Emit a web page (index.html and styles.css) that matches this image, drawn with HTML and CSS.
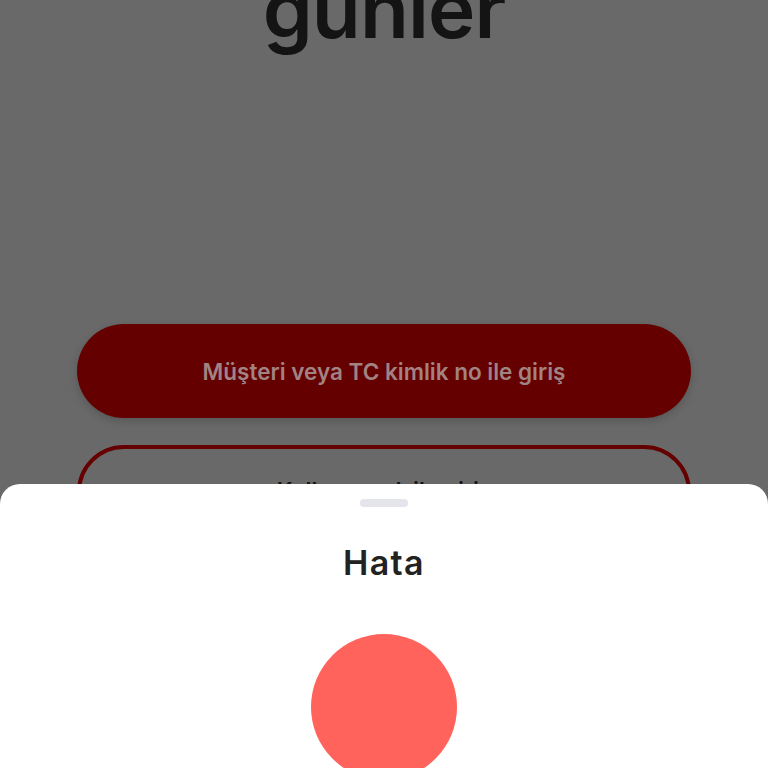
FILE: index.html
```html
<!DOCTYPE html>
<html lang="tr">
<head>
<meta charset="utf-8">
<title>Hata</title>
<link rel="stylesheet" href="styles.css">
</head>
<body>
<div class="screen">
  <main class="page">
    <div class="logo">gunler</div>
    <div class="actions">
      <button class="btn btn-primary">Müşteri veya TC kimlik no ile giriş</button>
      <button class="btn btn-outline">Kullanıcı adı ile giriş</button>
    </div>
  </main>
  <section class="sheet">
    <div class="handle"></div>
    <h2 class="title">Hata</h2>
    <div class="circle"></div>
  </section>
</div>
</body>
</html>
```
FILE: styles.css
```css
* { box-sizing: border-box; }
html, body { margin: 0; padding: 0; }
body { width: 768px; height: 768px; overflow: hidden; font-family: "Inter", "Noto Sans", sans-serif; }
.screen { position: relative; width: 768px; height: 768px; overflow: hidden; background: #696969; }
.page { display: flex; flex-direction: column; align-items: center; padding: 0 77px; }
.logo { height: 326px; margin-top: -40px; font-size: 80px; line-height: 98px; font-weight: 600; letter-spacing: -0.9px; color: #141414; }
.actions { align-self: stretch; display: flex; flex-direction: column; gap: 27px; margin-top: 38px; }
.btn { width: 100%; height: 94px; border-radius: 47px; font-family: inherit; font-size: 22.5px; font-weight: 600; }
.btn-primary { background: #650000; border: 0; color: #a28383; padding-top: 2px; box-shadow: 0 3px 8px rgba(0,0,0,.18); }
.btn-outline { background: transparent; border: 4.5px solid #650000; color: #141414; padding-bottom: 4px; }
.sheet { position: absolute; left: 0; right: 0; top: 484px; bottom: 0; display: flex; flex-direction: column; align-items: center; background: #fff; border-radius: 20px 20px 0 0; padding-top: 15px; overflow: hidden; }
.handle { width: 48px; height: 8px; flex: none; border-radius: 4px; background: #e4e5ea; }
.title { margin: 34px 0 0; font-size: 34px; line-height: 44px; font-weight: 600; color: #222; letter-spacing: 1.3px; }
.circle { width: 146px; height: 146px; flex: none; margin-top: 49px; border-radius: 50%; background: #ff635c; }
```
